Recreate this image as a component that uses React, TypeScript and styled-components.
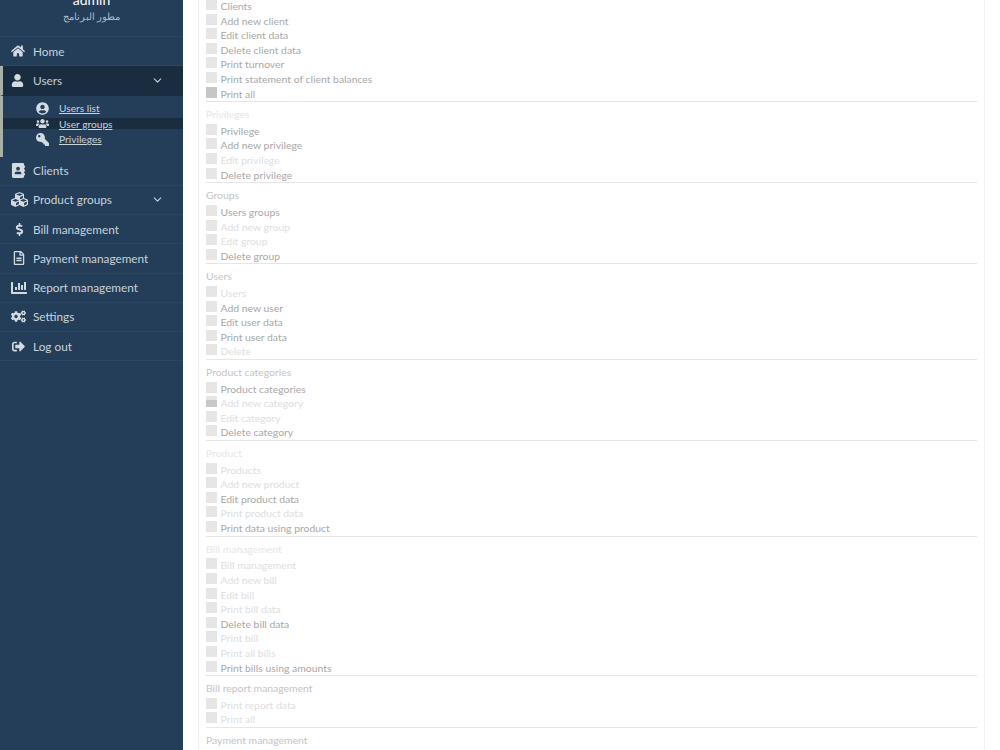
import React from 'react';
import styled, { createGlobalStyle } from 'styled-components';
import {
  FaHome,
  FaUser,
  FaUserCircle,
  FaUsers,
  FaKey,
  FaAddressBook,
  FaCubes,
  FaDollarSign,
  FaRegFileAlt,
  FaChartBar,
  FaCogs,
  FaSignOutAlt,
} from 'react-icons/fa';
import { FiChevronDown } from 'react-icons/fi';

const GlobalStyle = createGlobalStyle`
  html, body {
    margin: 0;
    padding: 0;
    background: #fff;
    font-family: Lato, "Noto Sans", sans-serif;
  }
`;

const Page = styled.div`
  display: flex;
  height: 750px;
  overflow: hidden;
`;

const Sidebar = styled.aside`
  width: 183px;
  flex: none;
  background: #243d58;
  color: #c9d3dc;
`;

const Profile = styled.div`
  height: 37px;
  border-bottom: 1px solid #2b4763;
  box-sizing: border-box;
  text-align: center;
  overflow: hidden;
`;

const ProfileName = styled.div`
  margin-top: -8px;
  font-size: 14px;
  line-height: 16px;
  color: #fff;
`;

const ProfileRole = styled.div`
  font-size: 10px;
  line-height: 16px;
  color: #aebbc7;
  font-family: "Noto Sans", sans-serif;
`;

const MenuRow = styled.div<{ $active?: boolean }>`
  height: 29.25px;
  box-sizing: border-box;
  display: flex;
  align-items: center;
  padding: 0 19px 0 ${(p) => (p.$active ? '8px' : '11px')};
  font-size: 11.8px;
  border-bottom: 1px solid ${(p) => (p.$active ? '#1a2d40' : '#2b4763')};
  background: ${(p) => (p.$active ? '#1a2d40' : 'transparent')};
  color: ${(p) => (p.$active ? '#c3ced8' : '#c9d3dc')};
  border-left: ${(p) => (p.$active ? '3px solid #a9b0aa' : '0')};
`;

const MenuIcon = styled.span<{ $size?: number; $inset?: number }>`
  width: 22px;
  flex: none;
  display: flex;
  align-items: center;
  box-sizing: border-box;
  padding-left: ${(p) => p.$inset ?? 0}px;
  font-size: ${(p) => p.$size ?? 14}px;
  color: #d3dbe2;
`;

const MenuLabel = styled.span`
  flex: 1;
`;

const Chevron = styled(FiChevronDown)`
  font-size: 13px;
  color: #c9d3dc;
`;

const SubMenu = styled.div`
  height: 61px;
  box-sizing: border-box;
  padding-top: 6.75px;
  border-left: 3px solid #a9b0aa;
`;

const SubRow = styled.div<{ $active?: boolean }>`
  height: 11.5px;
  margin-bottom: 4px;
  display: flex;
  align-items: center;
  padding-left: 33px;
  background: ${(p) => (p.$active ? '#1a2d40' : 'transparent')};
`;

const SubIcon = styled.span`
  width: 23px;
  flex: none;
  display: flex;
  align-items: center;
  font-size: 13px;
  color: #d3dbe2;
`;

const KeyIcon = styled(FaKey)`
  transform: scaleX(-1);
`;

const SubLink = styled.a`
  font-size: 10.2px;
  color: #c9d3dc;
  text-decoration: underline;
`;

const Main = styled.main`
  flex: 1;
  padding: 0 15px;
`;

const Card = styled.div`
  width: 787px;
  height: 800px;
  box-sizing: border-box;
  margin-top: -22.7px;
  padding: 0 7px;
  border-left: 1px solid #f1f1f1;
  border-right: 1px solid #f1f1f1;
`;

const Section = styled.section`
  padding-top: 21.7px;
  border-bottom: 1px solid #e6e6e6;
  position: relative;
`;

const SectionTitle = styled.div<{ $faint?: boolean }>`
  position: absolute;
  top: 5px;
  left: 0;
  font-size: 10.4px;
  line-height: 15px;
  color: ${(p) => (p.$faint ? '#e6e6e6' : '#c4c4c4')};
`;

const Row = styled.div`
  height: 14.6px;
  display: flex;
  align-items: flex-start;
  gap: 3.5px;
`;

const Check = styled.span<{ $tone?: 'on' | 'half' }>`
  width: 11px;
  height: 11px;
  flex: none;
  background: ${(p) =>
    p.$tone === 'on'
      ? '#c6c6c6'
      : p.$tone === 'half'
        ? 'linear-gradient(#e6e6e6 35%, #c8c8c8 35%)'
        : '#e6e6e6'};
`;

const RowLabel = styled.span<{ $faint?: boolean }>`
  font-size: 10.4px;
  line-height: 15px;
  color: ${(p) => (p.$faint ? '#dedede' : '#a8a8a8')};
  white-space: nowrap;
`;

type PermRow = { label: string; tone?: 'on' | 'half'; faint?: boolean };
type Perm = { title: string; faint?: boolean; rows: PermRow[] };

const sections: Perm[] = [
  {
    title: 'Clients',
    rows: [
      { label: 'Clients' },
      { label: 'Add new client' },
      { label: 'Edit client data' },
      { label: 'Delete client data' },
      { label: 'Print turnover' },
      { label: 'Print statement of client balances' },
      { label: 'Print all', tone: 'on' },
    ],
  },
  {
    title: 'Privileges',
    faint: true,
    rows: [
      { label: 'Privilege' },
      { label: 'Add new privilege' },
      { label: 'Edit privilege', faint: true },
      { label: 'Delete privilege' },
    ],
  },
  {
    title: 'Groups',
    rows: [
      { label: 'Users groups' },
      { label: 'Add new group', faint: true },
      { label: 'Edit group', faint: true },
      { label: 'Delete group' },
    ],
  },
  {
    title: 'Users',
    rows: [
      { label: 'Users', faint: true },
      { label: 'Add new user' },
      { label: 'Edit user data' },
      { label: 'Print user data' },
      { label: 'Delete', faint: true },
    ],
  },
  {
    title: 'Product categories',
    rows: [
      { label: 'Product categories' },
      { label: 'Add new category', tone: 'half', faint: true },
      { label: 'Edit category', faint: true },
      { label: 'Delete category' },
    ],
  },
  {
    title: 'Product',
    faint: true,
    rows: [
      { label: 'Products', faint: true },
      { label: 'Add new product', faint: true },
      { label: 'Edit product data' },
      { label: 'Print product data', faint: true },
      { label: 'Print data using product' },
    ],
  },
  {
    title: 'Bill management',
    faint: true,
    rows: [
      { label: 'Bill management', faint: true },
      { label: 'Add new bill', faint: true },
      { label: 'Edit bill', faint: true },
      { label: 'Print bill data', faint: true },
      { label: 'Delete bill data' },
      { label: 'Print bill', faint: true },
      { label: 'Print all bills', faint: true },
      { label: 'Print bills using amounts' },
    ],
  },
  {
    title: 'Bill report management',
    rows: [
      { label: 'Print report data', faint: true },
      { label: 'Print all', faint: true },
    ],
  },
  { title: 'Payment management', rows: [{ label: 'Payments', faint: true }] },
];

export default function App() {
  return (
    <>
      <GlobalStyle />
      <Page>
        <Sidebar>
          <Profile>
            <ProfileName>admin</ProfileName>
            <ProfileRole dir="rtl">مطور البرنامج</ProfileRole>
          </Profile>
          <MenuRow>
            <MenuIcon><FaHome /></MenuIcon>
            <MenuLabel>Home</MenuLabel>
          </MenuRow>
          <MenuRow $active>
            <MenuIcon $size={13}><FaUser /></MenuIcon>
            <MenuLabel>Users</MenuLabel>
            <Chevron />
          </MenuRow>
          <SubMenu>
            <SubRow>
              <SubIcon><FaUserCircle /></SubIcon>
              <SubLink href="#">Users list</SubLink>
            </SubRow>
            <SubRow $active>
              <SubIcon><FaUsers /></SubIcon>
              <SubLink href="#">User groups</SubLink>
            </SubRow>
            <SubRow>
              <SubIcon><KeyIcon /></SubIcon>
              <SubLink href="#">Privileges</SubLink>
            </SubRow>
          </SubMenu>
          <MenuRow>
            <MenuIcon $size={15}><FaAddressBook /></MenuIcon>
            <MenuLabel>Clients</MenuLabel>
          </MenuRow>
          <MenuRow>
            <MenuIcon $size={17}><FaCubes /></MenuIcon>
            <MenuLabel>Product groups</MenuLabel>
            <Chevron />
          </MenuRow>
          <MenuRow>
            <MenuIcon $size={13} $inset={2}><FaDollarSign /></MenuIcon>
            <MenuLabel>Bill management</MenuLabel>
          </MenuRow>
          <MenuRow>
            <MenuIcon $size={14} $inset={1}><FaRegFileAlt /></MenuIcon>
            <MenuLabel>Payment management</MenuLabel>
          </MenuRow>
          <MenuRow>
            <MenuIcon $size={16}><FaChartBar /></MenuIcon>
            <MenuLabel>Report management</MenuLabel>
          </MenuRow>
          <MenuRow>
            <MenuIcon $size={15}><FaCogs /></MenuIcon>
            <MenuLabel>Settings</MenuLabel>
          </MenuRow>
          <MenuRow>
            <MenuIcon $size={13} $inset={1}><FaSignOutAlt /></MenuIcon>
            <MenuLabel>Log out</MenuLabel>
          </MenuRow>
        </Sidebar>
        <Main>
          <Card>
            {sections.map((s) => (
              <Section key={s.title}>
                <SectionTitle $faint={s.faint}>{s.title}</SectionTitle>
                {s.rows.map((r) => (
                  <Row key={r.label}>
                    <Check $tone={r.tone} />
                    <RowLabel $faint={r.faint}>{r.label}</RowLabel>
                  </Row>
                ))}
              </Section>
            ))}
          </Card>
        </Main>
      </Page>
    </>
  );
}
